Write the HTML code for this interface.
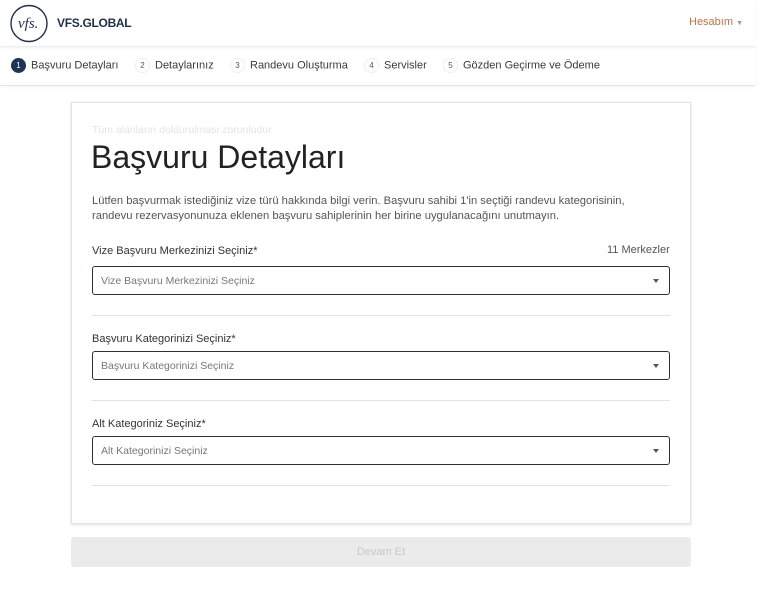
<!DOCTYPE html>
<html><head><meta charset="utf-8"><style>
*{margin:0;padding:0;box-sizing:border-box}
body{width:768px;height:589px;background:#fff;font-family:"Liberation Sans",sans-serif;color:#333;position:relative;overflow:hidden}
.a{position:absolute;white-space:nowrap}
.hdr{position:absolute;left:0;top:0;width:755px;height:47px;border-bottom:1px solid #eee;box-shadow:0 1px 3px rgba(0,0,0,.05)}
.steps{position:absolute;left:0;top:48px;width:755px;height:38px;border-bottom:1px solid #e6e6e6;box-shadow:0 1px 3px rgba(0,0,0,.06)}
.num{display:inline-block;width:15px;height:15px;border-radius:50%;border:1px solid #eee;font-size:8px;text-align:center;line-height:13px;color:#555;vertical-align:middle;margin-right:5px}
.num.on{background:#1d3557;color:#fff;border-color:#1d3557}
.st{font-size:11px;color:#3a3a3a}
.card{position:absolute;left:71px;top:102px;width:620px;height:422px;border:1px solid #e2e2e2;box-shadow:0 1px 3px rgba(0,0,0,.12)}
.lbl{font-size:11px;color:#333}
.sel{position:absolute;left:92px;width:578px;height:29px;border:1px solid #2a3433;border-radius:3px;font-size:10.5px;color:#777;padding:8px 0 0 8px}
.sel:after{content:"";position:absolute;right:10px;top:12px;border-left:3.5px solid transparent;border-right:3.5px solid transparent;border-top:4px solid #555}
.hr{position:absolute;left:92px;width:578px;height:1px;background:#e3e3e3}
</style></head><body>
<div class="hdr"></div>
<svg class="a" style="left:9px;top:4px" width="42" height="40"><circle cx="20" cy="19.5" r="18" fill="none" stroke="#1e2f4a" stroke-width="1.4"/><text x="9" y="24" font-family="Liberation Serif" font-style="italic" font-size="15" fill="#1e2f4a">vfs.</text></svg>
<div class="a" style="left:57px;top:16px;font-size:12px;font-weight:bold;color:#1e2f4a;letter-spacing:-.3px">VFS.GLOBAL</div>
<div class="a" style="left:689px;top:16px;font-size:11px;color:#c8703f">Hesabım <span style="font-size:7px;color:#999">▼</span></div>
<div class="steps"></div>
<div class="a st" style="left:11px;top:58px"><span class="num on">1</span>Başvuru Detayları</div>
<div class="a st" style="left:135px;top:58px"><span class="num">2</span>Detaylarınız</div>
<div class="a st" style="left:230px;top:58px"><span class="num">3</span>Randevu Oluşturma</div>
<div class="a st" style="left:364px;top:58px"><span class="num">4</span>Servisler</div>
<div class="a st" style="left:443px;top:58px"><span class="num">5</span>Gözden Geçirme ve Ödeme</div>
<div class="card"></div>
<div class="a" style="left:92px;top:124px;font-size:10.5px;color:#e4e4e4">Tüm alanların doldurulması zorunludur</div>
<div class="a" style="left:91px;top:139px;font-size:32px;color:#222">Başvuru Detayları</div>
<div class="a" style="left:92px;top:194px;font-size:11.2px;color:#555;line-height:15px">Lütfen başvurmak istediğiniz vize türü hakkında bilgi verin. Başvuru sahibi 1'in seçtiği randevu kategorisinin,<br>randevu rezervasyonunuza eklenen başvuru sahiplerinin her birine uygulanacağını unutmayın.</div>
<div class="a lbl" style="left:92px;top:245px">Vize Başvuru Merkezinizi Seçiniz*</div>
<div class="a lbl" style="left:607px;top:244px;color:#555">11 Merkezler</div>
<div class="sel" style="top:266px">Vize Başvuru Merkezinizi Seçiniz</div>
<div class="hr" style="top:315px"></div>
<div class="a lbl" style="left:92px;top:333px">Başvuru Kategorinizi Seçiniz*</div>
<div class="sel" style="top:351px">Başvuru Kategorinizi Seçiniz</div>
<div class="hr" style="top:400px"></div>
<div class="a lbl" style="left:92px;top:418px">Alt Kategoriniz Seçiniz*</div>
<div class="sel" style="top:436px">Alt Kategorinizi Seçiniz</div>
<div class="hr" style="top:485px"></div>
<div class="a" style="left:71px;top:537px;width:620px;height:30px;background:#ebebeb;border-radius:3px;text-align:center;line-height:30px;font-size:11px;color:#c8c8c8">Devam Et</div>
</body></html>
